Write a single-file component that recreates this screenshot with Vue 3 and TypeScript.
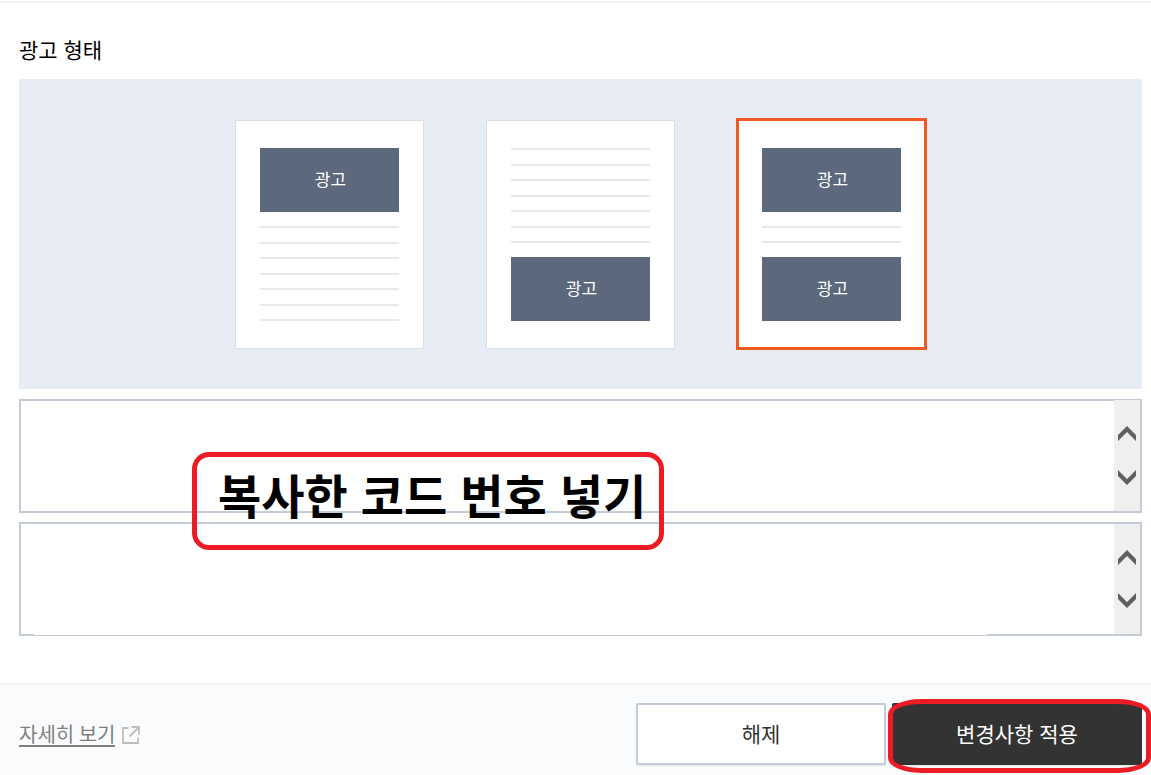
<script setup lang="ts">
import { ref } from 'vue'

type Part = 'ad' | 'lines'

interface Layout {
  id: string
  label: string
  parts: Part[]
  lineCount: number
}

const layouts: Layout[] = [
  { id: 'top', label: '상단', parts: ['ad', 'lines'], lineCount: 7 },
  { id: 'bottom', label: '하단', parts: ['lines', 'ad'], lineCount: 7 },
  { id: 'both', label: '상단 하단', parts: ['ad', 'lines', 'ad'], lineCount: 2 },
]

const selected = ref('both')
const codes = ref(['', ''])
const areas = ref<HTMLTextAreaElement[]>([])

function scrollCode(index: number, step: number) {
  areas.value[index]?.scrollBy({ top: step })
}
</script>

<template>
  <main class="page">
    <section class="settings">
      <h2 id="layout-title" class="title">광고 형태</h2>

      <div class="panel" role="radiogroup" aria-labelledby="layout-title">
        <label
          v-for="layout in layouts"
          :key="layout.id"
          class="card"
          :class="{ selected: selected === layout.id }"
        >
          <input
            v-model="selected"
            class="radio"
            type="radio"
            name="layout"
            :value="layout.id"
            :aria-label="layout.label"
          />
          <template v-for="(part, i) in layout.parts" :key="i">
            <span v-if="part === 'ad'" class="ad">광고</span>
            <span v-else class="lines">
              <span v-for="n in layout.lineCount" :key="n" class="line"></span>
            </span>
          </template>
        </label>
      </div>

      <div class="codes">
        <div v-for="(_, i) in codes" :key="i" class="code">
          <textarea
            ref="areas"
            v-model="codes[i]"
            class="code-input"
            :aria-label="`코드 ${i + 1}`"
          ></textarea>
          <div class="scroller">
            <button type="button" class="arrow" aria-label="위로" @click="scrollCode(i, -20)">
              <svg width="18" height="15" viewBox="0 0 18 15">
                <path d="M0 9 9 0l9 9v6L9 6l-9 9z" fill="#606060" />
              </svg>
            </button>
            <button type="button" class="arrow" aria-label="아래로" @click="scrollCode(i, 20)">
              <svg width="18" height="15" viewBox="0 0 18 15">
                <path d="M0 6l9 9 9-9V0L9 9 0 0z" fill="#606060" />
              </svg>
            </button>
          </div>
        </div>
        <p class="note">복사한 코드 번호 넣기</p>
      </div>
    </section>

    <footer class="footer">
      <a class="more" href="#">
        <span class="more-text">자세히 보기</span>
        <svg class="more-icon" width="18" height="18" viewBox="0 0 18 18" fill="none" stroke="#bdbdbd">
          <path d="M6.5 2H1v15h15v-5.5" stroke-width="1.8" />
          <path d="M9.5 1H17v7.5M17 1 7.5 10.5" stroke-width="1.8" />
        </svg>
      </a>
      <div class="actions">
        <button type="button" class="button">해제</button>
        <div class="marked">
          <button type="button" class="button primary">변경사항 적용</button>
        </div>
      </div>
    </footer>
  </main>
</template>

<style>
body {
  margin: 0;
  background: #fff;
}
</style>

<style scoped>
.page {
  box-sizing: border-box;
  display: flex;
  flex-direction: column;
  min-height: 100vh;
  padding-top: 1px;
  overflow: hidden;
  font-family: 'Liberation Sans', 'Noto Sans CJK KR', sans-serif;
  color: #000;
}

.settings {
  padding: 33px 9px 47px 19px;
  border-top: 2px solid #f1f2f7;
}

.title {
  margin: 0 0 13px;
  font-size: 21px;
  line-height: 30px;
  font-weight: 400;
}

.panel {
  display: flex;
  justify-content: center;
  gap: 62px;
  padding: 41px 0 40px;
  background: #e7ebf4;
}

.card {
  position: relative;
  box-sizing: border-box;
  display: flex;
  flex-direction: column;
  gap: 14px;
  width: 189px;
  height: 229px;
  padding: 27px 24px;
  border: 1px solid #d9dee5;
  border-radius: 1px;
  background: #fff;
  cursor: pointer;
}

.card.selected::after {
  content: '';
  position: absolute;
  inset: -3px -2px -2px;
  border: 3px solid #f05a22;
}

.radio {
  position: absolute;
  inset: 0;
  margin: 0;
  opacity: 0;
}

.ad {
  box-sizing: border-box;
  display: flex;
  align-items: center;
  justify-content: center;
  flex: none;
  height: 64px;
  padding: 0 0 2px 2px;
  background: #5c687b;
  color: #fff;
  font-family: 'Noto Sans CJK KR', sans-serif;
  font-size: 17px;
  line-height: 24px;
}

.lines {
  display: flex;
  flex: 1;
  flex-direction: column;
  justify-content: space-between;
}

.line {
  height: 2px;
  background: #e8e8e8;
}

.codes {
  position: relative;
  display: flex;
  flex-direction: column;
  gap: 9px;
  margin-top: 10px;
}

.code {
  position: relative;
  display: flex;
  height: 110px;
  border: 2px solid #c4cdd7;
}

.code:nth-child(2)::after {
  content: '';
  position: absolute;
  left: 13px;
  right: 153px;
  bottom: -1px;
  height: 1px;
  background: #fff;
}

.code-input {
  flex: 1;
  min-width: 0;
  padding: 8px;
  border: 0;
  outline: 0;
  resize: none;
  overflow: hidden;
  background: #fff;
  font: 16px/24px 'Liberation Mono', 'Noto Sans CJK KR', monospace;
}

.scroller {
  display: flex;
  flex-direction: column;
  align-items: center;
  justify-content: center;
  gap: 28px;
  width: 26px;
  background: #efefef;
}

.code:first-child .scroller {
  gap: 29px;
  margin-top: -1px;
}

.arrow {
  display: block;
  padding: 0;
  border: 0;
  background: none;
}

.arrow svg {
  display: block;
}

.note {
  position: absolute;
  top: 53px;
  left: 173px;
  box-sizing: border-box;
  width: 472px;
  height: 98px;
  margin: 0;
  padding-left: 21px;
  border: 5px solid #ed1c24;
  border-radius: 17px;
  font-size: 47px;
  line-height: 82px;
  font-weight: 700;
  white-space: nowrap;
  pointer-events: none;
}

.footer {
  display: flex;
  flex: 1;
  align-items: flex-start;
  justify-content: space-between;
  padding: 18px 9px 10px 19px;
  border-top: 2px solid #f0f1f5;
  background: #fafbfd;
}

.more {
  display: flex;
  align-items: center;
  gap: 7px;
  margin-top: 20px;
  color: #808080;
  text-decoration: none;
}

.more-text {
  border-bottom: 2px solid #808080;
  font-family: 'Noto Sans CJK KR', sans-serif;
  font-size: 20px;
  line-height: 22px;
}

.more-icon {
  display: block;
}

.actions {
  display: flex;
  gap: 6px;
}

.button {
  display: block;
  box-sizing: border-box;
  width: 250px;
  height: 62px;
  padding: 2px 0 0;
  border: 2px solid #c4cdd7;
  border-radius: 2px;
  background: #fff;
  box-shadow: 0 1px 2px rgba(0, 0, 0, 0.1);
  color: #333;
  font-family: inherit;
  font-size: 21px;
  line-height: 30px;
}

.primary {
  border-color: #333;
  background: #333;
  color: #fff;
}

.marked {
  position: relative;
}

.marked::after {
  content: '';
  position: absolute;
  inset: -4px -9px -8px -4px;
  border: 5px solid #ed1c24;
  border-radius: 33px / 15px;
  pointer-events: none;
}
</style>
